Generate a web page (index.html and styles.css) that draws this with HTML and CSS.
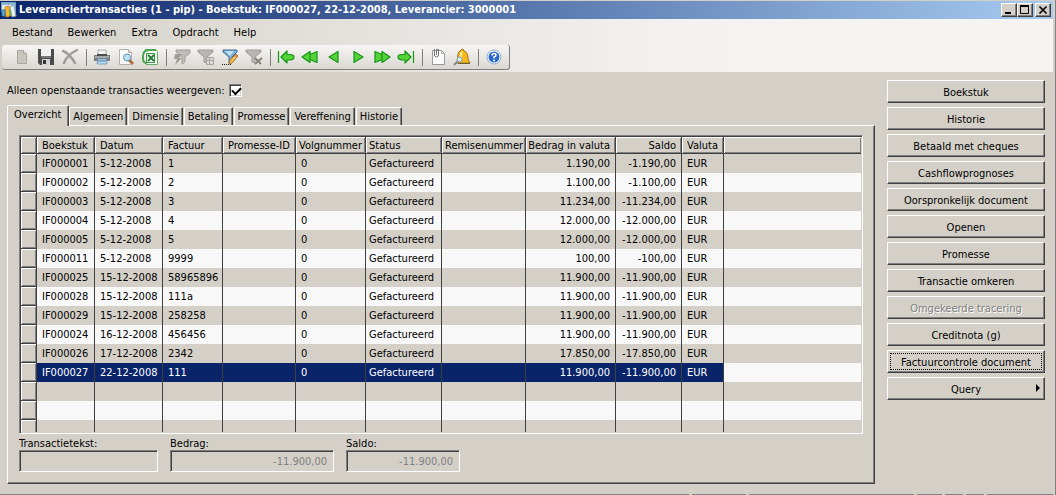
FILE: index.html
```html
<!DOCTYPE html>
<html lang="nl">
<head>
<meta charset="utf-8">
<title>Leveranciertransacties</title>
<link rel="stylesheet" href="styles.css">
</head>
<body>
<div class="window">
  <header class="titlebar">
    <svg class="app-icon" width="16" height="16" viewBox="0 0 16 16"><rect x="0.5" y="0.5" width="14" height="9" fill="#dcecf8" stroke="#78a0c0"/><path d="M1 2h13" stroke="#8fb8d8" stroke-width="2"/><path d="M4 5l4-1 1 10-4 1z" fill="#ffb52c" stroke="#d88a20"/><path d="M9 5l4-2 2 11-4 1z" fill="#e9f4f8" stroke="#7d9ba8"/><path d="M1 8h3v6H1z" fill="#5ab7dd" stroke="#2e7299"/><path d="M8.500 8l1 6" stroke="#7cae42" stroke-width="2"/></svg>
    <h1 class="title">Leveranciertransacties (1 - pip) - Boekstuk: IF000027, 22-12-2008, Leverancier: 3000001</h1>
    <div class="controls">
      <button class="ctl" aria-label="Minimaliseren"><svg width="12" height="10"><path d="M2 8h6" stroke="#000" stroke-width="2"/></svg></button>
      <button class="ctl" aria-label="Maximaliseren"><svg width="12" height="10"><path d="M1.500 1.500h8v7h-8zM1 1h9" fill="none" stroke="#000"/><path d="M1 1h9" stroke="#000" stroke-width="2"/></svg></button>
      <button class="ctl close" aria-label="Sluiten"><svg width="12" height="10"><path d="M2.500 1.500l7 7m0-7l-7 7" stroke="#000" stroke-width="1.700"/></svg></button>
    </div>
  </header>
  <div class="bars">
    <nav class="menu">
      <button>Bestand</button><button>Bewerken</button><button>Extra</button><button>Opdracht</button><button>Help</button>
    </nav>
    <div class="toolbar" role="toolbar">
      <button aria-label="Nieuw"><svg width="18" height="18" viewBox="0 0 18 18"><path d="M4.500 2.500h6l3 3v10h-9z" fill="#c8c4be" stroke="#aaa49d"/><path d="M10.500 2.500v3h3" fill="#e6e3df" stroke="#aaa49d"/></svg></button>
      <button aria-label="Opslaan"><svg width="18" height="18" viewBox="0 0 18 18"><path d="M1 1h16v16H3l-2-2z" fill="#4c4c4c"/><path d="M4 1h10v7H4z" fill="#eef0f2"/><path d="M4 8h10v2H4z" fill="#777"/><path d="M5 11h8v6H5z" fill="#d2d4d6"/><path d="M6 12h3v4H6z" fill="#333"/></svg></button>
      <button aria-label="Verwijderen"><svg width="18" height="18" viewBox="0 0 18 18"><path d="M2 3c5 2 9 7 12 12M16 2C10 5 5 10 3 15" fill="none" stroke="#a09d99" stroke-width="2.500" stroke-linecap="round"/></svg></button>
      <span class="sep"></span>
      <button aria-label="Afdrukken"><svg width="18" height="18" viewBox="0 0 18 18"><path d="M5 2h8v6H5z" fill="#f2f2f2" stroke="#aaa"/><path d="M1 7h16v6H1z" fill="#7b7e81"/><path d="M2 8h14v2H2z" fill="#a6a9ac"/><path d="M4 6h10v2H4z" fill="#4b4e50"/><path d="M5 11h8l1 5H4z" fill="#b8dcf2" stroke="#7c9db8"/><path d="M5 13h8" stroke="#4b83ab"/></svg></button>
      <button aria-label="Afdrukvoorbeeld"><svg width="18" height="18" viewBox="0 0 18 18"><path d="M2.500 1.500h9l3 3v12h-12z" fill="#f9f9f9" stroke="#b1b1b1"/><path d="M11.500 1.500v3h3" fill="#ddd" stroke="#b1b1b1"/><path d="M12 12l4 4" stroke="#b46b3c" stroke-width="3"/><circle cx="10" cy="9.500" r="3.500" fill="#b9e0f5" stroke="#6995b4"/></svg></button>
      <button aria-label="Exporteren naar Excel"><svg width="18" height="18" viewBox="0 0 18 18"><path d="M4 1.500h11l1.500 2v13H5" fill="#f5faf3" stroke="#69aa68"/><path d="M15 2H7Q2 3 2 8v3q0 4 4 4" fill="none" stroke="#4aa850" stroke-width="2"/><path d="M5.500 5.500h8v9h-8z" fill="#f4fbf1" stroke="#3c9744"/><path d="M7 7l6 6m0-6l-6 6" stroke="#207b31" stroke-width="1.800"/></svg></button>
      <span class="sep"></span>
      <button aria-label="Filteren op selectie"><svg width="18" height="18" viewBox="0 0 18 18"><path d="M3 2h14v3l-5 4v5l-3 2V9L3 4z" fill="#bfbbb6" stroke="#a29e99"/><path d="M2 6h7L6 10h3l-7 7 2-6H1z" fill="#a09c97"/></svg></button>
      <button aria-label="Filteren op raster"><svg width="18" height="18" viewBox="0 0 18 18"><path d="M1 2h15v2l-6 5v6l-3-1V9L1 4z" fill="#b9b5b0" stroke="#a29e99"/><path d="M9.500 9.500h7v7h-7zM9.500 12.500h7m-4-3v7" fill="#dedbd7" stroke="#a8a49f"/></svg></button>
      <button aria-label="Geavanceerd filter"><svg width="18" height="18" viewBox="0 0 18 18"><path d="M2 2h14v2l-5 5v5l-3 1V9L2 4z" fill="#7aafd2" stroke="#416f91"/><path d="M4 3h9l-4 5z" fill="#c4e1f3"/><path d="M1 16.500h10" stroke="#222" stroke-dasharray="1 1"/><path d="M15 6l2 2-6 7-3 1 1-4z" fill="#f2bd52" stroke="#ad7633"/><path d="M14 7l2 2" stroke="#e08063" stroke-width="2"/></svg></button>
      <button aria-label="Filter verwijderen"><svg width="18" height="18" viewBox="0 0 18 18"><path d="M1 2h15v2l-6 5v6l-3-1V9L1 4z" fill="#b9b5b0" stroke="#a29e99"/><path d="M10 10l6 6m1-6l-7 6" stroke="#85817c" stroke-width="1.800"/></svg></button>
      <span class="sep"></span>
      <button aria-label="Eerste"><svg class="go" width="18" height="18" viewBox="0 0 18 18"><path d="M1.500 3v12M4 9l6-6v3.500h3q4 0 4 2.500t-4 3h-3v3z"/></svg></button>
      <button aria-label="Vorige pagina"><svg class="go" width="18" height="18" viewBox="0 0 18 18"><path d="M1 9l8-5.500v3l7-3v11l-7-3v3z"/><path d="M9 7v4"/></svg></button>
      <button aria-label="Vorige"><svg class="go" width="18" height="18" viewBox="0 0 18 18"><path d="M4 9l9-5.500v11z"/></svg></button>
      <button aria-label="Volgende"><svg class="go" width="18" height="18" viewBox="0 0 18 18"><path d="M14 9L5 3.500v11z"/></svg></button>
      <button aria-label="Volgende pagina"><svg class="go" width="18" height="18" viewBox="0 0 18 18"><path d="M17 9L9 3.500v3l-7-3v11l7-3v3z"/><path d="M9 7v4"/></svg></button>
      <button aria-label="Laatste"><svg class="go" width="18" height="18" viewBox="0 0 18 18"><path d="M16.500 3v12M14 9L8 3v3.500H5Q1 6.500 1 9t4 3h3v3z"/></svg></button>
      <span class="sep"></span>
      <button aria-label="Documenten"><svg width="18" height="18" viewBox="0 0 18 18"><path d="M3.500 2.500h9l3 3v11h-12z" fill="#fafafa" stroke="#9a9a9a"/><path d="M12.500 2.500v3h3" fill="none" stroke="#aaa"/><path d="M5.500 1v6q0 2 2 2t2-2V1.500h-2V7" fill="none" stroke="#777"/></svg></button>
      <button aria-label="Waarschuwing"><svg width="18" height="18" viewBox="0 0 18 18"><path d="M9 1q2 0 2 2 4 1 4 8l2 4H4l1-9q1-3 2-3z" fill="#f5b91e" stroke="#9a7423"/><path d="M9 4q-2 3-1 7" fill="none" stroke="#ffec9c" stroke-width="2"/><path d="M5 13l-4 4" stroke="#888" stroke-width="2"/><circle cx="6.500" cy="11.500" r="2.500" fill="#dceef5" stroke="#829aa3"/><path d="M5 15.500h12" stroke="#705c32"/></svg></button>
      <span class="sep"></span>
      <button aria-label="Help"><svg width="18" height="18" viewBox="0 0 18 18"><circle cx="9" cy="9" r="7" fill="#fff" stroke="#8fa8cc"/><circle cx="9" cy="9" r="5.500" fill="#2868cd"/><path d="M7 7.500q0-2 2-2t2 1.500-2 2v1.500" fill="none" stroke="#fff" stroke-width="1.500"/><circle cx="9" cy="12.500" r="1" fill="#fff"/></svg></button>
    </div>
  </div>
  <main class="body">
    <section class="main">
      <div class="check">
        <label for="open">Alleen openstaande transacties weergeven:</label>
        <input id="open" type="checkbox" checked>
      </div>
      <div class="tabs" role="tablist">
        <button class="tab active" role="tab" aria-selected="true">Overzicht</button><button class="tab" role="tab">Algemeen</button><button class="tab" role="tab">Dimensie</button><button class="tab" role="tab">Betaling</button><button class="tab" role="tab">Promesse</button><button class="tab" role="tab">Vereffening</button><button class="tab" role="tab">Historie</button>
      </div>
      <div class="panel">
        <div class="grid">
          <table>
            <colgroup><col class="c-sel"><col class="c-doc"><col class="c-date"><col class="c-inv"><col class="c-pid"><col class="c-seq"><col class="c-stat"><col class="c-rem"><col class="c-amt"><col class="c-bal"><col class="c-cur"><col></colgroup>
            <thead><tr><th></th><th>Boekstuk</th><th>Datum</th><th>Factuur</th><th>Promesse-ID</th><th class="tight">Volgnummer</th><th>Status</th><th class="tight">Remisenummer</th><th class="num">Bedrag in valuta</th><th class="num">Saldo</th><th>Valuta</th><th></th></tr></thead>
            <tbody>
              <tr><td></td><td>IF000001</td><td>5-12-2008</td><td>1</td><td></td><td>0</td><td>Gefactureerd</td><td></td><td>1.190,00</td><td>-1.190,00</td><td>EUR</td><td></td></tr>
              <tr><td></td><td>IF000002</td><td>5-12-2008</td><td>2</td><td></td><td>0</td><td>Gefactureerd</td><td></td><td>1.100,00</td><td>-1.100,00</td><td>EUR</td><td></td></tr>
              <tr><td></td><td>IF000003</td><td>5-12-2008</td><td>3</td><td></td><td>0</td><td>Gefactureerd</td><td></td><td>11.234,00</td><td>-11.234,00</td><td>EUR</td><td></td></tr>
              <tr><td></td><td>IF000004</td><td>5-12-2008</td><td>4</td><td></td><td>0</td><td>Gefactureerd</td><td></td><td>12.000,00</td><td>-12.000,00</td><td>EUR</td><td></td></tr>
              <tr><td></td><td>IF000005</td><td>5-12-2008</td><td>5</td><td></td><td>0</td><td>Gefactureerd</td><td></td><td>12.000,00</td><td>-12.000,00</td><td>EUR</td><td></td></tr>
              <tr><td></td><td>IF000011</td><td>5-12-2008</td><td>9999</td><td></td><td>0</td><td>Gefactureerd</td><td></td><td>100,00</td><td>-100,00</td><td>EUR</td><td></td></tr>
              <tr><td></td><td>IF000025</td><td>15-12-2008</td><td>58965896</td><td></td><td>0</td><td>Gefactureerd</td><td></td><td>11.900,00</td><td>-11.900,00</td><td>EUR</td><td></td></tr>
              <tr><td></td><td>IF000028</td><td>15-12-2008</td><td>111a</td><td></td><td>0</td><td>Gefactureerd</td><td></td><td>11.900,00</td><td>-11.900,00</td><td>EUR</td><td></td></tr>
              <tr><td></td><td>IF000029</td><td>15-12-2008</td><td>258258</td><td></td><td>0</td><td>Gefactureerd</td><td></td><td>11.900,00</td><td>-11.900,00</td><td>EUR</td><td></td></tr>
              <tr><td></td><td>IF000024</td><td>16-12-2008</td><td>456456</td><td></td><td>0</td><td>Gefactureerd</td><td></td><td>11.900,00</td><td>-11.900,00</td><td>EUR</td><td></td></tr>
              <tr><td></td><td>IF000026</td><td>17-12-2008</td><td>2342</td><td></td><td>0</td><td>Gefactureerd</td><td></td><td>17.850,00</td><td>-17.850,00</td><td>EUR</td><td></td></tr>
              <tr class="selected"><td></td><td>IF000027</td><td>22-12-2008</td><td>111</td><td></td><td>0</td><td>Gefactureerd</td><td></td><td>11.900,00</td><td>-11.900,00</td><td>EUR</td><td></td></tr>
              <tr><td></td><td></td><td></td><td></td><td></td><td></td><td></td><td></td><td></td><td></td><td></td><td></td></tr>
              <tr><td></td><td></td><td></td><td></td><td></td><td></td><td></td><td></td><td></td><td></td><td></td><td></td></tr>
              <tr class="partial"><td></td><td></td><td></td><td></td><td></td><td></td><td></td><td></td><td></td><td></td><td></td><td></td></tr>
            </tbody>
          </table>
        </div>
        <div class="fields">
          <div class="field f-text"><label for="txt">Transactietekst:</label><input id="txt" type="text" readonly></div>
          <div class="field f-amt"><label for="amt">Bedrag:</label><input id="amt" type="text" value="-11.900,00" readonly></div>
          <div class="field f-bal"><label for="bal">Saldo:</label><input id="bal" type="text" value="-11.900,00" readonly></div>
        </div>
      </div>
    </section>
    <aside class="actions">
      <button>Boekstuk</button>
      <button>Historie</button>
      <button>Betaald met cheques</button>
      <button>Cashflowprognoses</button>
      <button>Oorspronkelijk document</button>
      <button>Openen</button>
      <button>Promesse</button>
      <button>Transactie omkeren</button>
      <button disabled>Omgekeerde tracering</button>
      <button>Creditnota (g)</button>
      <button class="focused">Factuurcontrole document</button>
      <button class="query">Query<svg width="4" height="8"><path d="M0 0l4 4-4 4z"/></svg></button>
    </aside>
  </main>
  <footer class="status"><span class="s-main"></span><span class="s-a"></span><span class="s-b"></span><span class="s-c"></span><span class="s-d"></span><span class="s-d"></span><span class="s-e"></span></footer>
</div>
</body>
</html>
```
FILE: styles.css
```css
* { box-sizing: border-box; }
body {
  margin: 0;
  background: #d4d0c8;
  color: #000;
  font: 11px/13px "DejaVu Sans Condensed", Tahoma, sans-serif;
}
button, input { font: inherit; color: inherit; margin: 0; border-radius: 0; }
button { border: 0; padding: 0; background: none; }

.window {
  display: flex;
  flex-direction: column;
  min-height: 100vh;
  padding-top: 1px;
  border-right: 1px solid #808080;
}
.titlebar {
  display: flex;
  align-items: center;
  height: 18px;
  margin-right: 2px;
  padding: 0 2px 0 1px;
  background: linear-gradient(90deg, #0a246a, #a6caf0);
}
.title {
  flex: 1;
  margin: 0 0 0 2px;
  color: #fff;
  font-size: 11px;
  line-height: 16px;
  white-space: nowrap;
}
.controls { display: flex; }
.ctl {
  display: flex;
  width: 16px;
  height: 14px;
  padding: 1px;
  background: #d4d0c8;
  border: 1px solid;
  border-color: #fff #404040 #404040 #fff;
  box-shadow: inset -1px -1px #808080;
}
.ctl svg { flex: none; }
.close { margin-left: 2px; }

.bars {
  height: 53px;
  margin-right: 2px;
  background: linear-gradient(90deg, #d4d0c8 0, #f3f2f0 65%, #f5f4f2 100%);
}
.menu {
  display: flex;
  gap: 15px;
  height: 26px;
  padding-left: 12px;
}
.toolbar {
  display: inline-flex;
  align-items: center;
  height: 25px;
  margin-left: 2px;
  padding: 0 3px 0 8px;
  background: linear-gradient(#f7f6f5, #dbd8d2);
  border-right: 1px solid #808080;
  border-bottom: 1px solid #808080;
  border-radius: 3px;
}
.toolbar button { display: flex; justify-content: center; width: 24px; }
.sep { display: flex; justify-content: center; width: 8px; height: 17px; }
.sep::before { content: ""; width: 1px; background: #808080; }
.go path { fill: #54d337; stroke: #159516; stroke-width: 1.2; stroke-linejoin: round; }

.body { display: flex; gap: 12px; flex: 1; padding: 8px 10px 0 7px; }
.main { flex: 1; min-width: 0; }
.check { display: flex; align-items: center; gap: 4px; height: 21px; }
.check input {
  appearance: none;
  width: 13px;
  height: 13px;
  background: #fff;
  border: 1px solid;
  border-color: #808080 #fff #fff #808080;
  box-shadow: inset 1px 1px #404040, inset -1px -1px #d4d0c8;
}
.check input:checked::before {
  content: "";
  display: block;
  width: 7px;
  height: 4px;
  margin: 2px 0 0 2px;
  border: solid #000;
  border-width: 0 0 2px 2px;
  transform: rotate(-45deg);
}
.tabs { display: flex; align-items: flex-end; height: 23px; margin-top: 1px; }
.tab {
  height: 18px;
  padding: 0 3px;
  border: solid;
  border-width: 1px 1px 0;
  border-color: #fff #404040 #fff #fff;
  border-radius: 2px 2px 0 0;
  box-shadow: inset -1px 0 #808080;
}
.tab + .tab:not(:nth-child(2)) { margin-left: 1px; }
.tab.active {
  position: relative;
  height: 21px;
  margin-bottom: -1px;
  padding: 0 7px 3px 6px;
  background: #d4d0c8;
}
.panel {
  padding: 9px 11px 11px;
  border: 1px solid;
  border-color: #fff #404040 #404040 #fff;
  box-shadow: inset -1px -1px #808080;
}
.grid {
  padding: 1px;
  border: 1px solid;
  border-color: #808080 #fff #fff #808080;
  box-shadow: inset 1px 1px #404040;
}
table { width: 100%; table-layout: fixed; border-collapse: separate; border-spacing: 0; }
.c-sel { width: 16px; }
.c-doc { width: 58px; }
.c-date { width: 68px; }
.c-inv { width: 60px; }
.c-pid { width: 73px; }
.c-seq { width: 70px; }
.c-stat { width: 76px; }
.c-rem { width: 84px; }
.c-amt { width: 90px; }
.c-bal { width: 66px; }
.c-cur { width: 42px; }
th, td { padding: 0 5px; border-right: 1px solid #404040; white-space: nowrap; overflow: hidden; text-align: left; }
th:nth-child(7), td:nth-child(7) { padding-left: 3px; }
th {
  height: 17px;
  padding: 2px 0 0 5px;
  font-weight: normal;
  line-height: 14px;
  border-bottom: 1px solid #404040;
  box-shadow: inset 1px 1px #fff, inset -1px -1px #808080;
}
th.tight { padding-left: 3px; }
td { height: 19px; line-height: 18px; }
th:last-child, td:last-child { border-right: 0; }
th.num, td:nth-child(9), td:nth-child(10) { text-align: right; }
th.num { padding: 2px 5px 0 0; }
tbody tr:nth-child(even) { background: #f8f8f8; }
td:first-child, tbody tr td:first-child {
  background: #d4d0c8;
  border-bottom: 1px solid #404040;
  box-shadow: inset 1px 1px #fff, inset -1px -1px #808080;
}
.selected td:not(:first-child):not(:last-child) { background: #0a246a; color: #fff; }
tbody .partial td { height: 12px; line-height: 11px; }
tbody tr.partial td:first-child { border-bottom: 0; box-shadow: inset 1px 1px #fff, inset -1px 0 #808080; }

.fields { display: flex; gap: 12px; padding-top: 3px; }
.field { display: flex; flex-direction: column; }
.field input {
  width: 100%;
  height: 22px;
  padding: 0 6px;
  background: #d4d0c8;
  color: #808080;
  text-align: right;
  border: 1px solid;
  border-color: #808080 #fff #fff #808080;
  box-shadow: inset 1px 1px #404040;
  outline: 0;
}
.f-text { width: 139px; }
.f-amt { width: 164px; }
.f-bal { width: 114px; }

.actions { display: flex; flex-direction: column; gap: 4px; width: 158px; }
.actions button {
  display: grid;
  place-items: center;
  height: 23px;
  padding-top: 1px;
  border: 1px solid;
  border-color: #fff #404040 #404040 #fff;
  box-shadow: inset -1px -1px #808080;
}
.actions button:disabled { color: #808080; text-shadow: 1px 1px #fff; }
.actions .focused { outline: 1px dotted #000; outline-offset: -4px; }
.actions .query { position: relative; }
.query svg { position: absolute; right: 4px; top: 6px; }

.status { display: flex; gap: 3px; padding: 0 2px 0 0; }
.status span { height: 1px; background: #808080; }
.s-main { flex: 1; }
.s-a { width: 54px; }
.s-b { width: 165px; }
.s-c { width: 25px; }
.s-d { width: 18px; }
.s-e { width: 66px; }
```
